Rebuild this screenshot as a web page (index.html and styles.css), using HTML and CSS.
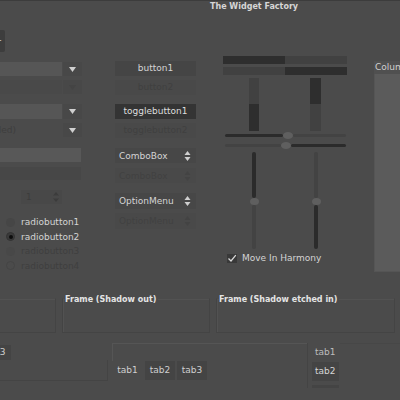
FILE: index.html
```html
<!DOCTYPE html>
<html>
<head>
<meta charset="utf-8">
<link rel="stylesheet" href="styles.css">
</head>
<body>
<div class="window">
  <div class="titlebar"><span class="title">The Widget Factory</span></div>
  <div class="toolbar"><div class="tool-btn"><span class="tool-glyph">+</span></div></div>

  <div class="main">
    <div class="col-a">
      <div class="combo row1">
        <div class="combo-entry"></div>
        <div class="combo-btn"><svg width="7" height="5" viewBox="0 0 7 5"><path d="M0 0H7L3.5 5Z" fill="#d0d0d0"/></svg></div>
      </div>
      <div class="combo row2 disabled">
        <div class="combo-entry"></div>
        <div class="combo-btn"><svg width="7" height="5" viewBox="0 0 7 5"><path d="M0 0H7L3.5 5Z" fill="#444"/></svg></div>
      </div>
      <div class="combo row3">
        <div class="combo-entry"></div>
        <div class="combo-btn"><svg width="7" height="5" viewBox="0 0 7 5"><path d="M0 0H7L3.5 5Z" fill="#d0d0d0"/></svg></div>
      </div>
      <div class="combo row4">
        <div class="combo-entry plain"><span class="dim-text">(disabled)</span></div>
        <div class="combo-btn"><svg width="7" height="5" viewBox="0 0 7 5"><path d="M0 0H7L3.5 5Z" fill="#d0d0d0"/></svg></div>
      </div>
      <div class="entry"></div>
      <div class="entry disabled"></div>
      <div class="spin">
        <span class="spin-val">1</span>
        <svg class="spin-arrows" width="6" height="12" viewBox="0 0 6 12"><path d="M0 4.5H6L3 1Z" fill="#3c3c3c"/><path d="M0 7.5H6L3 11Z" fill="#3c3c3c"/></svg>
      </div>
      <div class="radios">
        <div class="radio"><span class="dot off"></span><span class="rlabel">radiobutton1</span></div>
        <div class="radio"><span class="dot on"><span class="pip"></span></span><span class="rlabel">radiobutton2</span></div>
        <div class="radio dis"><span class="dot off-dis"></span><span class="rlabel">radiobutton3</span></div>
        <div class="radio dis"><span class="dot ring-dis"></span><span class="rlabel">radiobutton4</span></div>
      </div>
    </div>

    <div class="col-b">
      <div class="btn b1">button1</div>
      <div class="btn b2 disabled">button2</div>
      <div class="btn b3 toggled">togglebutton1</div>
      <div class="btn b4 disabled">togglebutton2</div>
      <div class="sel s1"><span>ComboBox</span><svg width="7" height="12" viewBox="0 0 7 12"><path d="M0.5 5H6.5L3.5 1Z" fill="#cfcfcf"/><path d="M0.5 7H6.5L3.5 11Z" fill="#cfcfcf"/></svg></div>
      <div class="sel s2 disabled"><span>ComboBox</span><svg width="7" height="12" viewBox="0 0 7 12"><path d="M0.5 5H6.5L3.5 1Z" fill="#434343"/><path d="M0.5 7H6.5L3.5 11Z" fill="#434343"/></svg></div>
      <div class="sel s3"><span>OptionMenu</span><svg width="7" height="12" viewBox="0 0 7 12"><path d="M0.5 5H6.5L3.5 1Z" fill="#cfcfcf"/><path d="M0.5 7H6.5L3.5 11Z" fill="#cfcfcf"/></svg></div>
      <div class="sel s4 disabled"><span>OptionMenu</span><svg width="7" height="12" viewBox="0 0 7 12"><path d="M0.5 5H6.5L3.5 1Z" fill="#434343"/><path d="M0.5 7H6.5L3.5 11Z" fill="#434343"/></svg></div>
    </div>

    <div class="col-c">
      <div class="hbar"><div class="seg dark" style="width:62px"></div><div class="seg light grow"></div></div>
      <div class="hbar second"><div class="seg light" style="width:62px"></div><div class="seg dark grow"></div></div>
      <div class="vbars">
        <div class="vbar v1"><div class="seg light" style="height:26px"></div><div class="seg dark grow"></div></div>
        <div class="vbar v2"><div class="seg dark" style="height:26px"></div><div class="seg light grow"></div></div>
      </div>
      <div class="hslider h1"><div class="track dark" style="width:58px"></div><div class="knob"></div><div class="track light grow"></div></div>
      <div class="hslider h2"><div class="track light" style="width:56px"></div><div class="knob"></div><div class="track dark grow"></div></div>
      <div class="vsliders">
        <div class="vslider"><div class="vtrack dark" style="height:46px"></div><div class="vknob"></div><div class="vtrack light grow"></div></div>
        <div class="vslider second"><div class="vtrack light" style="height:46px"></div><div class="vknob"></div><div class="vtrack dark grow"></div></div>
      </div>
      <div class="check-row">
        <span class="checkbox"><svg width="10" height="9" viewBox="0 0 10 9"><path d="M1.5 4.5L4 7L8.8 1.2" fill="none" stroke="#d8d8d8" stroke-width="1.3"/></svg></span>
        <span class="clabel">Move In Harmony</span>
      </div>
    </div>

    <div class="col-d">
      <div class="tree-head">Column</div>
      <div class="tree-body"></div>
    </div>
  </div>

  <div class="frames">
    <div class="frame f1"><div class="flabel">Frame (Shadow in)</div></div>
    <div class="frame f2"><div class="flabel">Frame (Shadow out)</div></div>
    <div class="frame f3"><div class="flabel">Frame (Shadow etched in)</div></div>
  </div>

  <div class="notebooks">
    <div class="nb nb1">
      <div class="nb1-tabs"><div class="tab inactive">tab3</div></div>
      <div class="nb1-page"></div>
    </div>
    <div class="nb nb2">
      <div class="nb2-page"></div>
      <div class="nb2-tabs">
        <div class="tab active">tab1</div>
        <div class="tab inactive">tab2</div>
        <div class="tab inactive">tab3</div>
      </div>
    </div>
    <div class="nb nb3">
      <div class="nb3-tabs">
        <div class="vtab active">tab1</div>
        <div class="vtab inactive">tab2</div>
        <div class="vtab inactive stub"></div>
      </div>
      <div class="nb3-page"></div>
    </div>
  </div>
</div>
</body>
</html>
```

FILE: styles.css
```css
html, body {
  margin: 0;
  padding: 0;
  background: #4b4b4b;
}
body {
  width: 400px;
  height: 400px;
  overflow: hidden;
  font-family: "DejaVu Sans", sans-serif;
  font-size: 9px;
  color: #d4d4d4;
}
.window {
  width: 400px;
  height: 400px;
  overflow: hidden;
  border-top: 1px solid #3c3c3c;
  box-sizing: border-box;
}
.titlebar {
  height: 13px;
  padding-left: 210px;
  display: flex;
  align-items: center;
}
.title {
  font-weight: bold;
  font-size: 8px;
  color: #d6d6d6;
  line-height: 10px;
  margin-top: -1px;
}
.toolbar {
  height: 42px;
  display: flex;
  align-items: flex-start;
  padding-top: 16px;
  box-sizing: border-box;
}
.tool-btn {
  flex-shrink: 0;
  width: 22px;
  height: 22px;
  margin-left: -17px;
  background: #3d3d3d;
  border-radius: 2px;
  display: flex;
  align-items: center;
  justify-content: flex-end;
  padding-right: 3px;
  box-sizing: border-box;
}
.tool-glyph {
  color: #cfcfcf;
  font-size: 8px;
  line-height: 8px;
}

/* main area */
.main {
  display: flex;
  align-items: flex-start;
  margin-left: -60px;
  height: 236px;
}
.main > div { flex-shrink: 0; }
.col-a {
  width: 142px;
  padding-top: 6px;
  display: flex;
  flex-direction: column;
}
.combo {
  display: flex;
  height: 14px;
}
.combo > div { flex-shrink: 0; }
.combo.row2 { margin-top: 4px; }
.combo.row3 { margin-top: 10px; height: 15px; }
.combo.row4 { margin-top: 4px; }
.combo-entry {
  width: 122px;
  background: #565656;
  display: flex;
  align-items: center;
}
.combo.disabled .combo-entry { background: #494949; }
.combo-entry.plain { background: #4b4b4b; }
.dim-text {
  color: #3e3e3e;
  padding-left: 31px;
  white-space: nowrap;
}
.combo-btn {
  width: 19px;
  margin-left: 1px;
  background: #484848;
  display: flex;
  align-items: center;
  justify-content: center;
}
.entry {
  margin-top: 11px;
  width: 141px;
  height: 14px;
  background: #585858;
}
.entry.disabled {
  margin-top: 5px;
  height: 13px;
  background: #474747;
}
.spin {
  margin-top: 10px;
  margin-left: 81px;
  width: 41px;
  height: 14px;
  background: #484848;
  display: flex;
  align-items: center;
  justify-content: space-between;
  padding: 0 3px 0 5px;
  box-sizing: border-box;
}
.spin-val { color: #3c3c3c; }
.radios {
  margin-top: 11px;
  margin-left: 66px;
  display: flex;
  flex-direction: column;
}
.radio {
  height: 14.5px;
  display: flex;
  align-items: center;
}
.rlabel { margin-left: 6px; white-space: nowrap; }
.radio.dis .rlabel { color: #3f3f3f; }
.dot {
  flex-shrink: 0;
  width: 9px;
  height: 9px;
  border-radius: 50%;
  box-sizing: border-box;
  display: flex;
  align-items: center;
  justify-content: center;
}
.dot.off { background: #464646; }
.dot.on { background: #3a3a3a; border: 1px solid #333; }
.pip {
  width: 4px;
  height: 4px;
  border-radius: 50%;
  background: #0d0d0d;
}
.dot.off-dis { background: #484848; }
.dot.ring-dis { border: 1px solid #444; }

.col-b {
  margin-left: 33px;
  width: 81px;
  padding-top: 5px;
  display: flex;
  flex-direction: column;
}
.btn {
  height: 15px;
  line-height: 15px;
  text-align: center;
  background: #454545;
  white-space: nowrap;
}
.btn.disabled { background: #494949; color: #404040; }
.btn.toggled { background: #343434; color: #dedede; }
.btn.b2 { margin-top: 4px; }
.btn.b3 { margin-top: 9px; }
.btn.b4 { margin-top: 4px; }
.sel {
  height: 15px;
  background: #474747;
  display: flex;
  align-items: center;
  justify-content: space-between;
  padding: 0 5px 0 4px;
  box-sizing: border-box;
}
.sel.disabled { background: #494949; color: #414141; }
.sel.s1 { margin-top: 10px; }
.sel.s2 { margin-top: 5px; }
.sel.s3 { margin-top: 10px; height: 16px; }
.sel.s4 { margin-top: 4px; height: 16px; }

.col-c {
  margin-left: 27px;
  width: 124px;
  display: flex;
  flex-direction: column;
}
.hbar {
  display: flex;
  height: 8px;
}
.hbar.second { margin-top: 3px; }
.seg { flex-shrink: 0; }
.seg.dark { background: #2e2e2e; }
.seg.light { background: #414141; }
.grow { flex: 1 1 auto; }
.vbars {
  margin-top: 3px;
  height: 53px;
  display: flex;
}
.vbar {
  flex-shrink: 0;
  display: flex;
  flex-direction: column;
}
.vbar.v1 { width: 10px; margin-left: 26px; }
.vbar.v2 { width: 11px; margin-left: 51px; }
.hslider {
  display: flex;
  align-items: center;
  height: 7px;
  margin-left: 2px;
  width: 121px;
}
.hslider > div { flex-shrink: 0; }
.hslider > .grow { flex: 1 1 auto; }
.hslider.h1 { margin-top: 1px; }
.hslider.h2 { margin-top: 3px; }
.track {
  height: 3px;
  border-radius: 2px;
}
.track.dark { background: #2b2b2b; }
.track.light { background: #434343; }
.knob {
  width: 10px;
  height: 7px;
  border-radius: 50%;
  background: #5f5f5f;
}
.vsliders {
  margin-top: 3px;
  height: 97px;
  display: flex;
}
.vslider {
  flex-shrink: 0;
  width: 10px;
  margin-left: 26px;
  display: flex;
  flex-direction: column;
  align-items: center;
}
.vslider > div { flex-shrink: 0; }
.vslider > .grow { flex: 1 1 auto; }
.vslider.second { margin-left: 52px; }
.vtrack {
  width: 4px;
  border-radius: 2px;
}
.vtrack.dark { background: #2b2b2b; }
.vtrack.light { background: #434343; }
.vknob {
  width: 9px;
  height: 7px;
  border-radius: 50%;
  background: #5f5f5f;
}
.check-row {
  margin-top: 4px;
  margin-left: 4px;
  display: flex;
  align-items: center;
  height: 10px;
}
.checkbox {
  flex-shrink: 0;
  width: 10px;
  height: 9px;
  background: #393939;
  display: flex;
}
.clabel { margin-left: 5px; white-space: nowrap; }

.col-d {
  margin-left: 27px;
  width: 60px;
  padding-top: 5px;
  display: flex;
  flex-direction: column;
}
.tree-head {
  height: 13px;
  line-height: 13px;
  background: #505050;
  padding-left: 1px;
  color: #cfcfcf;
}
.tree-body {
  height: 197px;
  background: #5b5b5b;
  border-left: 1px solid #555;
  border-bottom: 1px solid #555;
}

/* frames */
.frames {
  display: flex;
  margin-left: -91px;
  height: 42px;
  padding-top: 6px;
  box-sizing: border-box;
}
.frame {
  flex-shrink: 0;
  height: 35px;
  border: 1px solid #444;
  border-top-color: transparent;
  box-shadow: inset 1px 1px 0 #525252;
  box-sizing: border-box;
}
.frame.f1 { width: 147px; }
.frame.f2 { width: 148px; margin-left: 6px; }
.frame.f3 { width: 179px; margin-left: 6px; }
.flabel {
  font-weight: bold;
  font-size: 8px;
  color: #e4e4e4;
  margin-top: -4px;
  margin-left: 2px;
  line-height: 10px;
  height: 10px;
  background: #4b4b4b;
  width: max-content;
  padding-right: 2px;
  white-space: nowrap;
}

/* notebooks */
.notebooks {
  display: flex;
  margin-top: 9px;
  height: 45px;
}
.nb { flex-shrink: 0; }
.tab {
  flex-shrink: 0;
  height: 18px;
  line-height: 18px;
  padding: 0 6px;
  color: #cfcfcf;
}
.tab.inactive { background: #444444; }
.nb1 {
  width: 108px;
  display: flex;
  flex-direction: column;
}
.nb1-tabs {
  display: flex;
  margin-left: -21px;
  padding-top: 2px;
}
.nb1-tabs .tab { height: 15px; line-height: 15px; }
.nb1-page {
  height: 21px;
  border-right: 1px solid #444;
  border-bottom: 1px solid #444;
  box-sizing: border-box;
}
.nb2 {
  margin-left: 4px;
  width: 195px;
  display: flex;
  flex-direction: column;
}
.nb2-page {
  height: 18px;
  border-left: 1px solid #555;
  border-top: 1px solid #555;
  box-sizing: border-box;
}
.nb2-tabs {
  display: flex;
  gap: 2px;
}
.nb2-tabs .tab { width: 30px; padding: 0; text-align: center; height: 19px; line-height: 19px; }
.nb2-tabs .tab.active { width: 31px; }
.nb3 {
  display: flex;
  flex: 1 1 auto;
}
.nb3-tabs {
  flex-shrink: 0;
  width: 33px;
  display: flex;
  flex-direction: column;
  border-left: 1px solid #444;
  box-sizing: border-box;
}
.vtab {
  height: 19px;
  line-height: 19px;
  padding-left: 7px;
  color: #bdbdbd;
}
.vtab.inactive {
  background: #444444;
  margin-left: 4px;
  margin-right: 1px;
  padding-left: 3px;
  color: #d6d6d6;
}
.vtab.stub { margin-top: 4px; height: 4px; }
.nb3-page {
  flex: 1 1 auto;
  height: 19px;
  border-top: 1px solid #474747;
}
```
